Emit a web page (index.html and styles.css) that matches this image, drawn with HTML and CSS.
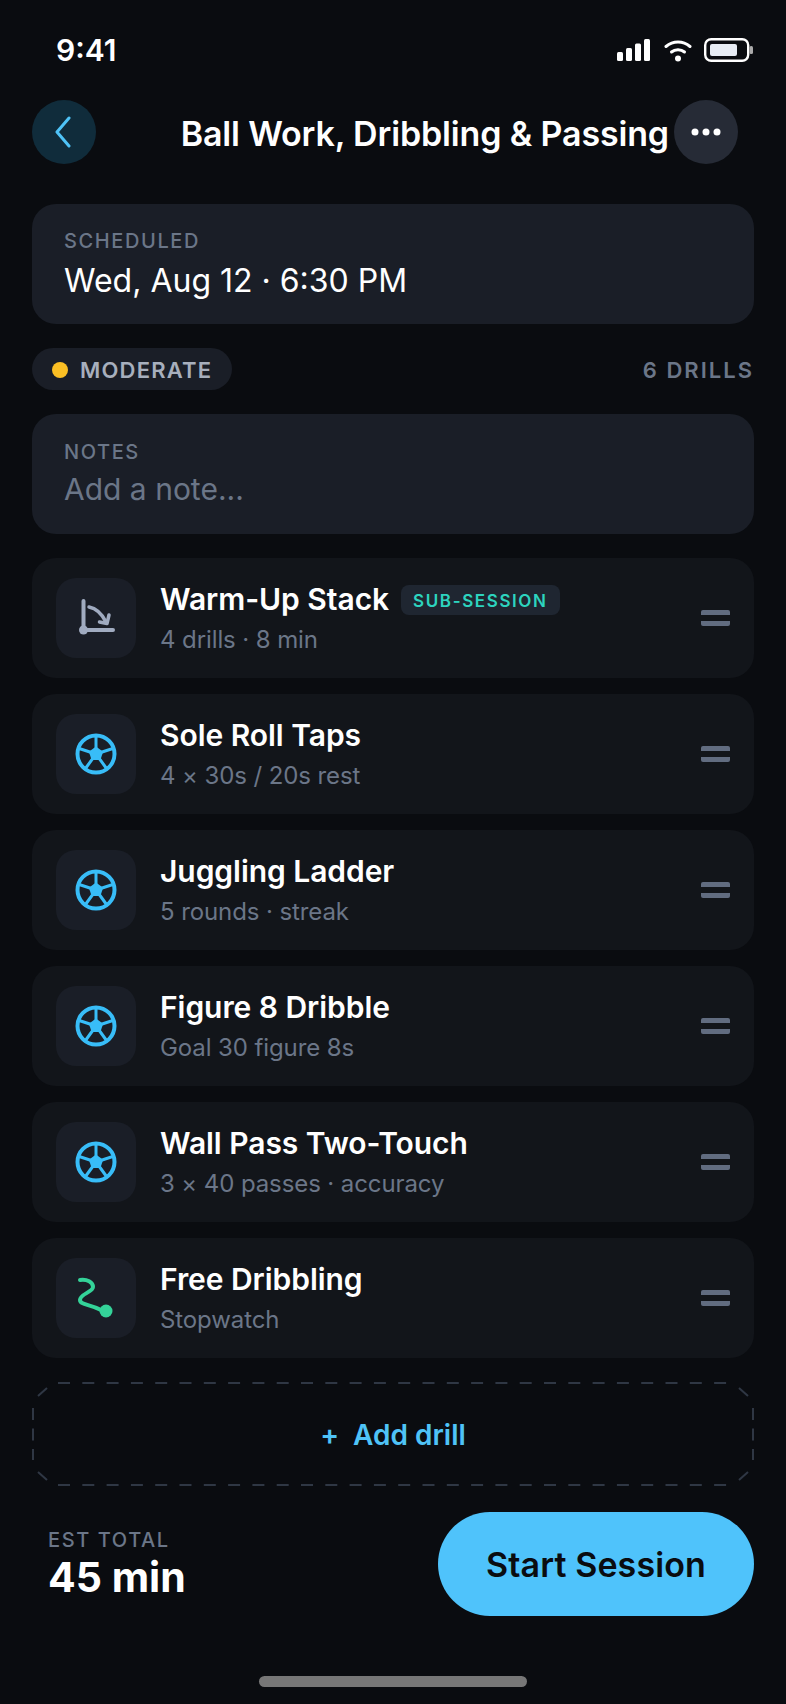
FILE: index.html
```html
<!DOCTYPE html>
<html lang="en">
<head>
    <meta charset="UTF-8">
    <meta name="viewport" content="width=device-width, initial-scale=1.0">
    <title>Ball Work, Dribbling &amp; Passing</title>
    <link rel="stylesheet" href="styles.css">
</head>
<body>

    <div class="status-bar">
        <span class="time">9:41</span>
        <div class="status-icons">
            <svg class="signal" width="33" height="24" viewBox="0 0 33 24"><g fill="#fff"><rect x="0" y="14" width="6" height="9" rx="1.500"/><rect x="9" y="10" width="6" height="13" rx="1.500"/><rect x="18" y="5.500" width="6" height="17.500" rx="1.500"/><rect x="27" y="1" width="6" height="22" rx="1.500"/></g></svg>
            <svg width="28" height="24" viewBox="0 0 28 24" fill="none" stroke="#fff" stroke-width="3" stroke-linecap="round"><path d="M2 8.500C9 2.500 19 2.500 26 8.500"/><path d="M7.500 14C11 11 17 11 20.500 14"/><circle cx="14" cy="20.500" r="3" fill="#fff" stroke="none"/></svg>
            <svg width="49" height="24" viewBox="0 0 49 24" fill="none"><rect x="1.200" y="1.200" width="43" height="21.600" rx="6" stroke="#fff" stroke-width="2.400"/><rect x="6" y="6" width="27" height="12" rx="2" fill="#e8edf5"/><rect x="45.500" y="8" width="3.500" height="8" rx="1.500" fill="#aaa"/></svg>
        </div>
    </div>

    <div class="header">
        <button class="round-btn back-btn">
            <svg width="22" height="32" viewBox="0 0 22 32" fill="none" stroke="#4fc3f7" stroke-width="3" stroke-linecap="round" stroke-linejoin="round"><path d="M16 2L4 16l12 14"/></svg>
        </button>
        <h1 class="page-title">Ball Work, Dribbling &amp; Passing</h1>
        <button class="round-btn more-btn">
            <svg width="34" height="10" viewBox="0 0 34 10" fill="#fff"><circle cx="6" cy="5" r="3.500"/><circle cx="17" cy="5" r="3.500"/><circle cx="28" cy="5" r="3.500"/></svg>
        </button>
    </div>

    <div class="content">
        <div class="card">
            <div class="card-label">SCHEDULED</div>
            <div class="card-value">Wed, Aug 12 · 6:30 PM</div>
        </div>

        <div class="meta-row">
            <div class="pill"><span class="dot"></span>MODERATE</div>
            <span class="drill-count">6 DRILLS</span>
        </div>

        <div class="card card-notes">
            <div class="card-label">NOTES</div>
            <div class="card-value placeholder">Add a note...</div>
        </div>

        <div class="drills">
            <div class="drill">
                <div class="drill-icon">
                    <svg width="44" height="44" viewBox="0 0 44 44" fill="none" stroke="#a0abc0" stroke-width="4" stroke-linecap="round" stroke-linejoin="round"><path d="M9.500 5V34H39"/><circle cx="9.500" cy="34" r="4.500" fill="#a0abc0" stroke="none"/><path d="M15 11C23 12.500 28 18 32 26" stroke-width="3.500"/><path d="M35 19L33 27.500L25.500 26" stroke-width="3.500"/></svg>
                </div>
                <div class="drill-text">
                    <div class="drill-name">Warm-Up Stack <span class="tag">SUB-SESSION</span></div>
                    <div class="drill-sub">4 drills · 8 min</div>
                </div>
                <div class="handle"></div>
            </div>

            <div class="drill">
                <div class="drill-icon">
                    <svg width="44" height="44" viewBox="0 0 44 44"><use href="#ball"/></svg>
                </div>
                <div class="drill-text">
                    <div class="drill-name">Sole Roll Taps</div>
                    <div class="drill-sub">4 × 30s / 20s rest</div>
                </div>
                <div class="handle"></div>
            </div>

            <div class="drill">
                <div class="drill-icon">
                    <svg width="44" height="44" viewBox="0 0 44 44"><use href="#ball"/></svg>
                </div>
                <div class="drill-text">
                    <div class="drill-name">Juggling Ladder</div>
                    <div class="drill-sub">5 rounds · streak</div>
                </div>
                <div class="handle"></div>
            </div>

            <div class="drill">
                <div class="drill-icon">
                    <svg width="44" height="44" viewBox="0 0 44 44"><use href="#ball"/></svg>
                </div>
                <div class="drill-text">
                    <div class="drill-name">Figure 8 Dribble</div>
                    <div class="drill-sub">Goal 30 figure 8s</div>
                </div>
                <div class="handle"></div>
            </div>

            <div class="drill">
                <div class="drill-icon">
                    <svg width="44" height="44" viewBox="0 0 44 44"><use href="#ball"/></svg>
                </div>
                <div class="drill-text">
                    <div class="drill-name">Wall Pass Two-Touch</div>
                    <div class="drill-sub">3 × 40 passes · accuracy</div>
                </div>
                <div class="handle"></div>
            </div>

            <div class="drill">
                <div class="drill-icon">
                    <svg width="44" height="44" viewBox="0 0 44 44" fill="none" stroke="#34d399" stroke-width="4" stroke-linecap="round"><path d="M6 4C13 3 19 6 19 11C19 16 6 18 6 24C6 29 16 28 27 34"/><circle cx="32" cy="35" r="6.500" fill="#34d399" stroke="none"/></svg>
                </div>
                <div class="drill-text">
                    <div class="drill-name">Free Dribbling</div>
                    <div class="drill-sub">Stopwatch</div>
                </div>
                <div class="handle"></div>
            </div>
        </div>

        <button class="add-drill">
            <svg class="dash-frame" width="722" height="104" viewBox="0 0 722 104" fill="none" stroke="#2f3744" stroke-width="2">
                <path stroke-dasharray="12 12.300" d="M26 1H696M26 103H696"/>
                <path stroke-dasharray="12 8.500" d="M1 26V78M721 26V78"/>
                <path d="M15 6L6 14M707 6L716 14M15 98L6 90M707 98L716 90"/>
            </svg>
            <span class="plus">+</span>Add drill
        </button>

        <div class="footer">
            <div class="total">
                <div class="total-label">EST TOTAL</div>
                <div class="total-value">45 min</div>
            </div>
            <button class="start-btn">Start Session</button>
        </div>
    </div>

    <div class="home-indicator"></div>

    <svg class="defs" width="0" height="0">
        <defs>
            <g id="ball" fill="none" stroke="#38bdf8" stroke-width="4" stroke-linejoin="round">
                <circle cx="22" cy="22" r="18.500"/>
                <path d="M22 4V22M39.600 16.300L22 22M32.900 37L22 22M11.100 37L22 22M4.400 16.300L22 22" stroke-width="3"/>
                <path d="M22 14.500L29.100 19.700L26.400 28H17.600L14.900 19.700Z" fill="#38bdf8" stroke="none"/>
            </g>
        </defs>
    </svg>

</body>
</html>
```

FILE: styles.css
```css
* {
    box-sizing: border-box;
}
body {
    margin: 0;
    height: 1704px;
    overflow: hidden;
    background-color: #0a0c10;
    color: #fff;
    font-family: Inter, "Liberation Sans", sans-serif;
}
button {
    border: none;
    font-family: inherit;
    cursor: pointer;
}
.defs {
    display: block;
}

.status-bar {
    display: flex;
    justify-content: space-between;
    align-items: center;
    height: 100px;
    padding: 0 33px 0 56px;
}
.time {
    font-size: 30px;
    font-weight: 600;
}
.status-icons {
    display: flex;
    align-items: center;
    gap: 12px;
}
.signal {
    margin-right: 2px;
}

.header {
    display: flex;
    align-items: center;
    height: 64px;
    padding: 0 48px 0 32px;
}
.round-btn {
    display: flex;
    align-items: center;
    justify-content: center;
    flex: none;
    width: 64px;
    height: 64px;
    padding: 0;
    border-radius: 50%;
}
.back-btn {
    background: #102c3b;
}
.more-btn {
    background: #262b36;
}
.page-title {
    flex: 1;
    margin: 2px 5px 0 0;
    font-size: 34px;
    font-weight: 600;
    letter-spacing: -0.150px;
    text-align: right;
    white-space: nowrap;
}

.content {
    display: flex;
    flex-direction: column;
    padding: 40px 32px 0;
}
.card {
    height: 120px;
    padding: 26px 32px 0;
    border-radius: 24px;
    background: #1a1e27;
}
.card-notes {
    padding-top: 27px;
}
.card-label {
    font-size: 20px;
    font-weight: 500;
    line-height: 22px;
    letter-spacing: 1.600px;
    color: #6b7688;
}
.card-value {
    margin-top: 9px;
    font-size: 32px;
    font-weight: 400;
    line-height: 40px;
}
.placeholder {
    margin-top: 6px;
    font-size: 30px;
    color: #6b7688;
}

.meta-row {
    display: flex;
    justify-content: space-between;
    align-items: center;
    margin: 24px 0;
}
.pill {
    display: flex;
    align-items: center;
    gap: 12px;
    height: 42px;
    padding: 1px 20px 0;
    border-radius: 21px;
    background: #1a1e27;
    font-size: 22px;
    font-weight: 600;
    letter-spacing: 1.200px;
    color: #a7afbd;
}
.dot {
    width: 16px;
    height: 16px;
    border-radius: 50%;
    background: #fbbf24;
}
.drill-count {
    padding-top: 2px;
    font-size: 22px;
    font-weight: 600;
    letter-spacing: 2px;
    color: #6b7688;
}

.drills {
    display: flex;
    flex-direction: column;
    gap: 16px;
    margin-top: 24px;
}
.drill {
    display: flex;
    align-items: center;
    height: 120px;
    padding: 0 24px;
    border-radius: 24px;
    background: #12151a;
}
.drill-icon {
    display: flex;
    align-items: center;
    justify-content: center;
    flex: none;
    width: 80px;
    height: 80px;
    margin-right: 24px;
    border-radius: 20px;
    background: #1a1e27;
}
.drill-text {
    flex: 1;
}
.drill-name {
    display: flex;
    align-items: center;
    gap: 12px;
    font-size: 30px;
    font-weight: 600;
    line-height: 38px;
    letter-spacing: -0.050px;
}
.drill-sub {
    margin-top: 6px;
    font-size: 24px;
    line-height: 32px;
    letter-spacing: -0.100px;
    color: #6b7688;
}
.tag {
    height: 30px;
    margin-top: 2px;
    padding: 0 12px;
    border-radius: 8px;
    background: #1f2631;
    font-size: 17px;
    font-weight: 600;
    line-height: 32px;
    letter-spacing: 1.600px;
    color: #2dd4bf;
}
.handle {
    flex: none;
    width: 29px;
    height: 16px;
    border-top: 5px solid #616c80;
    border-bottom: 5px solid #616c80;
    border-radius: 2px;
}

.add-drill {
    position: relative;
    display: flex;
    align-items: center;
    justify-content: center;
    gap: 14px;
    height: 104px;
    margin-top: 24px;
    padding: 2px 0 0;
    background: none;
    font-size: 28px;
    font-weight: 600;
    color: #4fc3f7;
}
.dash-frame {
    position: absolute;
    top: 0;
    left: 0;
}

.footer {
    display: flex;
    justify-content: space-between;
    align-items: center;
    margin-top: 26px;
    padding-left: 16px;
}
.total-label {
    font-size: 20px;
    font-weight: 500;
    line-height: 23px;
    letter-spacing: 1.600px;
    color: #6b7688;
}
.total-value {
    margin-top: 2px;
    font-size: 41px;
    font-weight: 700;
    line-height: 46px;
}
.start-btn {
    width: 316px;
    height: 104px;
    border-radius: 52px;
    background: #4fc3fb;
    font-size: 34px;
    font-weight: 600;
    letter-spacing: 0.100px;
    color: #0a0c10;
}

.home-indicator {
    width: 268px;
    height: 11px;
    margin: 60px auto 0;
    border-radius: 6px;
    background: #777;
}
```
